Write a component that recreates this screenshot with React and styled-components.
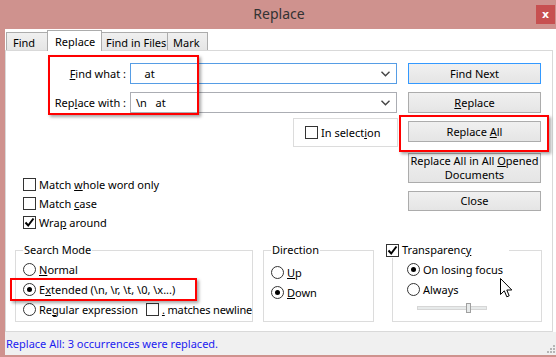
import React from "react";
import styled, { createGlobalStyle } from "styled-components";

const GlobalStyle = createGlobalStyle`
  html, body { margin: 0; padding: 0; background: #fff; }
  body { font-family: "Noto Sans", "Open Sans", sans-serif; font-size: 11px; color: #000; }
  * { box-sizing: border-box; }
`;

const Window = styled.div`
  position: relative;
  width: 556px;
  height: 357px;
  background: #cf928e;
  display: flex;
  flex-direction: column;
  overflow: hidden;
`;

const TitleBar = styled.div`
  height: 29px;
  flex: none;
  display: grid;
  grid-template-columns: 1fr auto 1fr;
  align-items: start;
`;

const Title = styled.div`
  grid-column: 2;
  padding: 4px 0 0 2px;
  font-size: 14px;
  color: #333;
  line-height: 20px;
`;

const CloseBtn = styled.div`
  grid-column: 3;
  justify-self: end;
  margin: 5px 1px 0 0;
  width: 19px;
  height: 19px;
  background: #c75050;
  color: #fff;
  font-weight: bold;
  font-size: 11px;
  font-family: "DejaVu Sans", sans-serif;
  display: flex;
  align-items: center;
  justify-content: center;
  line-height: 1;
`;

const Client = styled.div`
  flex: 1;
  margin: 0 0 2px 5px;
  background: #fff;
  display: flex;
  flex-direction: column;
`;

const TabStrip = styled.div`
  height: 21px;
  flex: none;
  display: flex;
  align-items: flex-end;
  padding-left: 1px;
  position: relative;
  z-index: 1;
`;

const Tab = styled.div`
  width: ${(p) => p.$w}px;
  height: ${(p) => (p.$active ? 21 : 18)}px;
  margin-bottom: ${(p) => (p.$active ? -1 : 0)}px;
  margin-left: ${(p) => p.$ml || 0}px;
  border: 1px solid #acacac;
  border-bottom: none;
  background: ${(p) => (p.$active ? "#fff" : "linear-gradient(#f0f0f0, #e5e5e5)")};
  display: flex;
  align-items: center;
  padding-left: ${(p) => p.$pl}px;
  padding-top: ${(p) => (p.$active ? 0 : 2)}px;
  white-space: nowrap;
`;

const Panel = styled.div`
  flex: 1;
  margin-right: 3px;
  border: 1px solid #d9d9d9;
  display: flex;
  flex-direction: column;
`;

const TopArea = styled.div`
  height: 191px;
  display: flex;
  gap: 11px;
`;

const LeftCol = styled.div`
  width: 391px;
  display: flex;
  flex-direction: column;
`;

const FieldRow = styled.div`
  display: flex;
  align-items: center;
  gap: 4px;
  height: 21px;
  margin-top: ${(p) => p.$mt}px;
`;

const FieldLabel = styled.div`
  width: 120px;
  text-align: right;
  white-space: nowrap;
`;

const Combo = styled.div`
  width: 267px;
  height: 21px;
  border: 1px solid ${(p) => (p.$focus ? "#569de5" : "#abadb3")};
  display: flex;
  align-items: center;
  justify-content: space-between;
  padding: 0 6px 0 5px;
  white-space: pre;
`;

const SelectionBox = styled.div`
  margin: 5px 0 0 287px;
  width: 105px;
  height: 29px;
  border: 1px solid #dcdcdc;
  display: flex;
  align-items: center;
  padding-left: 11px;
  gap: 3px;
`;

const CheckList = styled.div`
  margin: 28px 0 0 17px;
  display: flex;
  flex-direction: column;
`;

const OptRow = styled.div`
  height: ${(p) => p.$h || 19}px;
  display: flex;
  align-items: center;
  gap: 3px;
  white-space: nowrap;
`;

const Tight = styled.span`
  letter-spacing: -0.15px;
`;

const ButtonCol = styled.div`
  width: 133px;
  display: flex;
  flex-direction: column;
  padding-top: 12px;
`;

const Button = styled.div`
  height: ${(p) => p.$h || 21}px;
  margin-top: ${(p) => p.$mt || 0}px;
  border: 1px solid ${(p) => (p.$default ? "#3399ff" : "#acacac")};
  background: linear-gradient(#f0f0f0, #e5e5e5);
  display: flex;
  align-items: center;
  justify-content: center;
  text-align: center;
  line-height: 14px;
`;

const GroupRow = styled.div`
  display: flex;
  margin-left: 9px;
`;

const Group = styled.fieldset`
  margin: 0 0 0 ${(p) => p.$ml || 0}px;
  width: ${(p) => p.$w}px;
  height: 80px;
  border: 1px solid #dcdcdc;
  padding: ${(p) => p.$pt || 0}px 0 0 ${(p) => p.$pl || 7}px;
  min-width: 0;
`;

const Legend = styled.legend`
  padding: 0 ${(p) => p.$pr || 1}px 0 1px;
  margin-left: ${(p) => p.$ml || 0}px;
  line-height: 16px;
  background: #fff;
  display: flex;
  align-items: center;
  gap: 3px;
  white-space: nowrap;
`;

const Box = styled.span`
  width: 13px;
  height: 13px;
  flex: none;
  margin-left: ${(p) => p.$ml || 0}px;
  border: 1px solid #333;
  background: #fff;
  display: flex;
  align-items: center;
  justify-content: center;
`;

const Radio = styled.span`
  width: 13px;
  height: 13px;
  flex: none;
  border: 1px solid #333;
  border-radius: 50%;
  background: #fff;
  display: flex;
  align-items: center;
  justify-content: center;
  &::after {
    content: "";
    width: 5px;
    height: 5px;
    border-radius: 50%;
    background: ${(p) => (p.$on ? "#000" : "transparent")};
  }
`;

const Slider = styled.div`
  position: relative;
  margin: 7px 0 0 10px;
  width: 70px;
  height: 4px;
  background: #e7eaea;
  border: 1px solid #d6d6d6;
`;

const Thumb = styled.span`
  position: absolute;
  left: 48px;
  top: -4px;
  width: 5px;
  height: 10px;
  background: #e7eaea;
  border: 1px solid #a0a0a0;
`;

const StatusBar = styled.div`
  height: 23px;
  flex: none;
  background: #f0f0f0;
  color: #1c1cf0;
  display: flex;
  align-items: center;
  padding-left: 1px;
  position: relative;
`;

const Grip = styled.svg`
  position: absolute;
  right: 0;
  bottom: 1px;
`;

const Mark = styled.div`
  position: absolute;
  left: ${(p) => p.$x}px;
  top: ${(p) => p.$y}px;
  width: ${(p) => p.$w}px;
  height: ${(p) => p.$h}px;
  border: 2px solid #f00;
  box-shadow: 2px 2px 3px rgba(0, 0, 0, 0.35);
  pointer-events: none;
`;

const Cursor = styled.svg`
  position: absolute;
  left: 500px;
  top: 278px;
`;

const U = styled.span`
  text-decoration: underline;
  text-underline-offset: 1px;
`;

const Check = ({ on, ml }) => (
  <Box $ml={ml}>
    {on && (
      <svg width="11" height="11" viewBox="0 0 11 11">
        <path d="M1.5 5.5 L4.2 8.5 L9.5 1.5" fill="none" stroke="#000" strokeWidth="2" />
      </svg>
    )}
  </Box>
);

const Chevron = () => (
  <svg width="9" height="6" viewBox="0 0 9 6">
    <path d="M0.5 0.8 L4.5 4.8 L8.5 0.8" fill="none" stroke="#444" strokeWidth="1.4" />
  </svg>
);

export default function App() {
  return (
    <>
      <GlobalStyle />
      <Window>
        <TitleBar>
          <Title>Replace</Title>
          <CloseBtn>x</CloseBtn>
        </TitleBar>
        <Client>
          <TabStrip>
            <Tab $w={42} $pl={6}>Find</Tab>
            <Tab $w={55} $pl={7} $ml={-1} $active>Replace</Tab>
            <Tab $w={67} $pl={4} $ml={-1}>Find in Files</Tab>
            <Tab $w={41} $pl={5} $ml={-1}>Mark</Tab>
          </TabStrip>
          <Panel>
            <TopArea>
              <LeftCol>
                <FieldRow $mt={12}>
                  <FieldLabel>
                    <U>F</U>ind what :
                  </FieldLabel>
                  <Combo $focus>
                    <span>{"   at"}</span>
                    <Chevron />
                  </Combo>
                </FieldRow>
                <FieldRow $mt={8}>
                  <FieldLabel>
                    Rep<U>l</U>ace with :
                  </FieldLabel>
                  <Combo>
                    <span>{"\\n   at"}</span>
                    <Chevron />
                  </Combo>
                </FieldRow>
                <SelectionBox>
                  <Check />
                  <span>
                    In select<U>i</U>on
                  </span>
                </SelectionBox>
                <CheckList>
                  <OptRow>
                    <Check />
                    <span>
                      Match <U>w</U>hole word only
                    </span>
                  </OptRow>
                  <OptRow>
                    <Check />
                    <span>
                      Match <U>c</U>ase
                    </span>
                  </OptRow>
                  <OptRow>
                    <Check on />
                    <span>
                      Wra<U>p</U> around
                    </span>
                  </OptRow>
                </CheckList>
              </LeftCol>
              <ButtonCol>
                <Button $default>Find Next</Button>
                <Button $mt={8}>
                  <span>
                    <U>R</U>eplace
                  </span>
                </Button>
                <Button $mt={8}>
                  <span>
                    Replace <U>A</U>ll
                  </span>
                </Button>
                <Button $mt={11} $h={30}>
                  <span>
                    Replace All in All <U>O</U>pened
                    <br />
                    Documents
                  </span>
                </Button>
                <Button $mt={8} $h={20}>
                  Close
                </Button>
              </ButtonCol>
            </TopArea>
            <GroupRow>
              <Group $w={238} $pt={1}>
                <Legend>Search Mode</Legend>
                <OptRow $h={20}>
                  <Radio />
                  <span>
                    <U>N</U>ormal
                  </span>
                </OptRow>
                <OptRow $h={20}>
                  <Radio $on />
                  <span>
                    E<U>x</U>tended (\n, \r, \t, \0, \x...)
                  </span>
                </OptRow>
                <OptRow $h={20}>
                  <Radio />
                  <span>
                    Re<U>g</U>ular expression
                  </span>
                  <Check ml={5} />
                  <Tight>
                    <U>.</U> matches newline
                  </Tight>
                </OptRow>
              </Group>
              <Group $w={111} $ml={10} $pt={4}>
                <Legend>Direction</Legend>
                <OptRow $h={20}>
                  <Radio />
                  <span>
                    <U>U</U>p
                  </span>
                </OptRow>
                <OptRow $h={20}>
                  <Radio $on />
                  <span>
                    <U>D</U>own
                  </span>
                </OptRow>
              </Group>
              <Group $w={150} $ml={18} $pt={1} $pl={14}>
                <Legend $ml={-22} $pr={38}>
                  <Check on />
                  <span>
                    Transparenc<U>y</U>
                  </span>
                </Legend>
                <OptRow $h={20}>
                  <Radio $on />
                  <span>On losing focus</span>
                </OptRow>
                <OptRow $h={20}>
                  <Radio />
                  <span>Always</span>
                </OptRow>
                <Slider>
                  <Thumb />
                </Slider>
              </Group>
            </GroupRow>
          </Panel>
          <StatusBar>
            Replace All: 3 occurrences were replaced.
            <Grip width="10" height="10" viewBox="0 0 10 10">
              <g fill="#b5b5b5">
                <rect x="7" y="1" width="2" height="2" />
                <rect x="4" y="4" width="2" height="2" />
                <rect x="7" y="4" width="2" height="2" />
                <rect x="1" y="7" width="2" height="2" />
                <rect x="4" y="7" width="2" height="2" />
                <rect x="7" y="7" width="2" height="2" />
              </g>
            </Grip>
          </StatusBar>
        </Client>
        <Mark $x={48} $y={55} $w={151} $h={60} />
        <Mark $x={399} $y={115} $w={150} $h={37} />
        <Mark $x={10} $y={278} $w={187} $h={23} />
        <Cursor width="13" height="21" viewBox="0 0 13 21">
          <path
            d="M0.5 0.5 L0.5 16.5 L4.3 12.8 L6.8 18.8 L9.2 17.8 L6.8 12 L11.8 12 Z"
            fill="#fff"
            stroke="#000"
            strokeWidth="1"
            strokeLinejoin="round"
          />
        </Cursor>
      </Window>
    </>
  );
}
